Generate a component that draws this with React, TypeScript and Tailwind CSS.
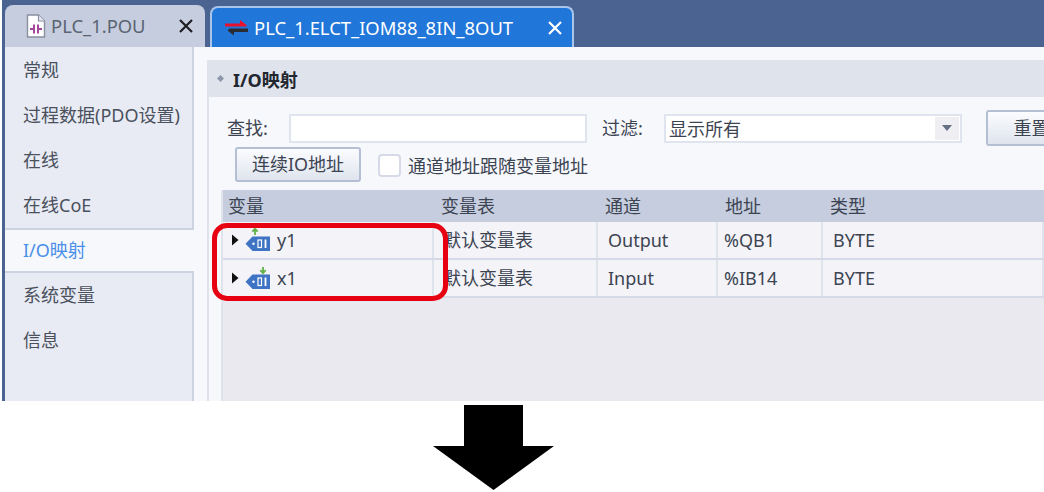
import React from "react";

const font = { fontFamily: '"Noto Sans", "Noto Sans CJK SC", sans-serif' };

function PouIcon() {
  return (
    <svg width="20" height="24" viewBox="0 0 20 24" className="shrink-0">
      <path d="M1.5 1h11l6 6v16h-17z" fill="#fff" stroke="#8a8fa0" strokeWidth="1.4" />
      <path d="M12.5 1v6h6" fill="#e6e8ef" stroke="#8a8fa0" strokeWidth="1.2" />
      <path d="M4 15h4M12 15h4M8 10.500v9M12 10.500v9" stroke="#a4469c" strokeWidth="2" fill="none" />
    </svg>
  );
}

function ElctIcon() {
  return (
    <svg width="24" height="16" viewBox="0 0 24 16" className="shrink-0">
      <path d="M0 3.500h15V0l7 5.500-1 1H0z" fill="#e8112d" />
      <path d="M23 8.500v3.500H9v3.500L2.500 10.500l2-2z" fill="#2b2b33" />
    </svg>
  );
}

function X({ color }: { color: string }) {
  return (
    <svg width="16" height="16" viewBox="0 0 16 16" className="shrink-0">
      <path d="M2 2l12 12M14 2L2 14" stroke={color} strokeWidth="2.200" fill="none" />
    </svg>
  );
}

function TagIcon({ up }: { up: boolean }) {
  return (
    <svg width="26" height="24" viewBox="0 0 26 24" className="shrink-0">
      {up ? (
        <path d="M10 7V1M7.300 3.700L10 .8l2.700 2.900" stroke="#62b04a" strokeWidth="1.800" fill="none" />
      ) : (
        <path d="M18 1v6M15.300 4.200L18 7.100l2.700-2.900" stroke="#62b04a" strokeWidth="1.800" fill="none" />
      )}
      <path d="M7.500 8.500H25V23H7.500L.5 15.700z" fill="#3f74c4" />
      <circle cx="8.500" cy="15.700" r="1.200" fill="#fff" />
      <rect x="13" y="12" width="3.500" height="7.500" fill="none" stroke="#fff" strokeWidth="1.200" />
      <path d="M20.500 11.500v8.500" stroke="#fff" strokeWidth="1.800" />
    </svg>
  );
}

function Caret() {
  return (
    <svg width="8" height="12" viewBox="0 0 8 12" className="shrink-0">
      <path d="M1 0.500L7.500 6 1 11.500z" fill="#111" />
    </svg>
  );
}

const items = ["常规", "过程数据(PDO设置)", "在线", "在线CoE", "I/O映射", "系统变量", "信息"];

function Row({ name, up, ch, addr }: { name: string; up: boolean; ch: string; addr: string }) {
  const cell = "flex items-center border-r-2 border-[#dfe3ec] text-[18px] text-[#3c4452]";
  return (
    <div className="flex h-[38px] border-b-2 border-[#d5dae6] bg-[#f3f3f8]">
      <div className={`${cell} w-[211px] gap-[6px] pl-[8px]`}>
        <Caret />
        <TagIcon up={up} />
        <span>{name}</span>
      </div>
      <div className={`${cell} w-[164px] pl-[9px]`}>默认变量表</div>
      <div className={`${cell} w-[120px] pl-[10px]`}>{ch}</div>
      <div className={`${cell} w-[105px] pl-[6px]`}>{addr}</div>
      <div className={`${cell} flex-1 border-r-0 pl-[10px]`}>BYTE</div>
    </div>
  );
}

export default function App() {
  return (
    <div className="relative w-[1044px] h-[492px] bg-white overflow-hidden flex flex-col" style={font}>
      <div className="h-[401px] ml-[2px] bg-[#4a6390] pl-[3px] flex flex-col overflow-hidden shrink-0">
        <div className="h-[47px] flex items-end shrink-0">
          <div className="w-[200px] h-[42px] bg-[#c5cdde] rounded-t-[8px] flex items-center pl-[21px] pr-[11px] gap-[5px] text-[18.400px] text-[#5b6472]">
            <PouIcon />
            <span className="flex-1">PLC_1.POU</span>
            <X color="#1d1d22" />
          </div>
          <div className="ml-[5px] w-[364px] h-[41px] bg-[#2176d9] rounded-t-[8px] border-2 border-b-0 border-[#a9c5ea] flex items-center pl-[13px] pr-[9px] gap-[5px] text-[18.400px] text-white">
            <ElctIcon />
            <span className="flex-1">PLC_1.ELCT_IOM88_8IN_8OUT</span>
            <X color="#ffffff" />
          </div>
        </div>

        <div className="flex-1 flex min-h-0">
          <div className="w-[189px] bg-[#e8ebf4] pt-[1px] shrink-0 border-r-2 border-[#cdd3e0]">
            {items.map((t) =>
              t === "I/O映射" ? (
                <div
                  key={t}
                  className="h-[45px] w-[189px] flex items-center pl-[18px] bg-[#f6f8fc] border-y-2 border-[#cdd3e0] text-[18px] text-[#4a8fe8]"
                >
                  {t}
                </div>
              ) : (
                <div key={t} className="h-[45px] flex items-center pl-[18px] text-[18px] text-[#4a505c] whitespace-nowrap">
                  {t}
                </div>
              )
            )}
          </div>

          <div className="flex-1 min-w-0 bg-[#f6f8fc] pl-[13px] pt-[13px]">
            <div className="h-full border-l-2 border-[#dfe3ec] flex flex-col">
              <div className="h-[37px] shrink-0 bg-[#dfe3ec] flex items-center pl-[9px] gap-[10px]">
                <span className="w-[5px] h-[5px] rotate-45 bg-[#8f98aa]" />
                <span className="mt-[3px] text-[18px] font-bold text-[#22262e]">I/O映射</span>
              </div>

              <div className="flex items-center h-[36px] mt-[13px] pl-[18px] shrink-0 text-[18px] text-[#3c4452] whitespace-nowrap">
                <span className="w-[62px] shrink-0">查找:</span>
                <div className="w-[298px] h-[29px] shrink-0 bg-white border-2 border-[#e0e4ee]" />
                <span className="ml-[15px] w-[62px] shrink-0">过滤:</span>
                <div className="w-[298px] h-[29px] shrink-0 bg-white border-2 border-[#e0e4ee] flex items-center pl-[3px] pr-[1px] justify-between">
                  <span className="mt-[2px]">显示所有</span>
                  <span className="w-[24px] h-[23px] bg-[#eeeef3] flex items-center justify-center">
                    <svg width="10" height="6" viewBox="0 0 10 6"><path d="M0 0h10L5 6z" fill="#667085" /></svg>
                  </span>
                </div>
                <button className="ml-[24px] w-[91px] h-[36px] shrink-0 rounded-[3px] border-2 border-[#b4bfd4] bg-gradient-to-b from-[#fbfcfe] to-[#dfe4ee] text-[#3c4452]">
                  重置
                </button>
              </div>

              <div className="flex items-center h-[35px] mt-[1px] pl-[26px] shrink-0 text-[18px] text-[#3c4452] whitespace-nowrap">
                <button className="w-[126px] h-[35px] rounded-[3px] border-2 border-[#b4bfd4] bg-gradient-to-b from-[#fbfcfe] to-[#dfe4ee] text-[#3c4452]">
                  连续IO地址
                </button>
                <span className="ml-[17px] mt-[2px] w-[23px] h-[23px] rounded-[4px] bg-white border-2 border-[#d5dae6]" />
                <span className="ml-[7px] mt-[3px]">通道地址跟随变量地址</span>
              </div>

              <div className="ml-[12px] mt-[8px] flex-1 flex flex-col bg-[#eae9f0] border-l-2 border-[#dfe3ec] min-h-0">
                <div className="h-[32px] shrink-0 flex items-center bg-[#c5cdde] text-[18px] text-[#3c4452]">
                  <div className="w-[211px] pl-[5px]">变量</div>
                  <div className="w-[164px] pl-[7px]">变量表</div>
                  <div className="w-[120px] pl-[7px]">通道</div>
                  <div className="w-[105px] pl-[7px]">地址</div>
                  <div className="pl-[7px]">类型</div>
                </div>
                <Row name="y1" up ch="Output" addr="%QB1" />
                <Row name="x1" up={false} ch="Input" addr="%IB14" />
              </div>
            </div>
          </div>
        </div>
      </div>

      <div className="flex-1 flex pt-[4px] pl-[433px]">
        <svg width="121" height="85" viewBox="0 0 121 85">
          <path d="M31 0h59v41h31L60.500 85 0 41h31z" fill="#000" />
        </svg>
      </div>

      <div className="absolute left-[212px] top-[223px] w-[236px] h-[78px] rounded-[15px] border-[5px] border-[#e60012]" />
    </div>
  );
}
